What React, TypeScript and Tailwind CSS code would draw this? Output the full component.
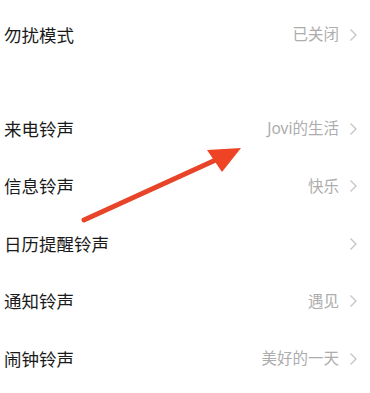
import React from 'react';

const rows: { label: string; value: string }[] = [
  { label: '来电铃声', value: 'Jovi的生活' },
  { label: '信息铃声', value: '快乐' },
  { label: '日历提醒铃声', value: '' },
  { label: '通知铃声', value: '遇见' },
  { label: '闹钟铃声', value: '美好的一天' },
];

const Chevron = () => (
  <svg width="9" height="14" viewBox="0 0 9 14" className="ml-[10px]">
    <path d="M1.5 1.5 L7 7 L1.5 12.5" fill="none" stroke="#c4c4c4" strokeWidth="1.3" />
  </svg>
);

const Row = ({ label, value, h }: { label: string; value: string; h: string }) => (
  <div className={`flex items-center justify-between pl-[4px] pr-[12px] ${h}`}>
    <span className="text-[17.5px] text-[#1a1a1a]">{label}</span>
    <div className="flex items-center">
      <span className="text-[15.5px] text-[#adadad]">{value}</span>
      <Chevron />
    </div>
  </div>
);

const App: React.FC = () => {
  return (
    <div
      className="relative w-[370px] h-[393px] bg-white overflow-hidden"
      style={{ fontFamily: '"Noto Sans", "Noto Sans CJK SC", sans-serif' }}
    >
      <div className="pt-[6px]">
        <Row label="勿扰模式" value="已关闭" h="h-[58px]" />
        <div className="h-[36px]" />
        {rows.map((r) => (
          <Row key={r.label} label={r.label} value={r.value} h="h-[57.5px]" />
        ))}
      </div>

      {/* annotation arrow */}
      <svg className="absolute left-0 top-0" width="370" height="393" viewBox="0 0 370 393">
        <line x1="84" y1="220" x2="220" y2="158" stroke="#e8442a" strokeWidth="5" strokeLinecap="round" />
        <polygon points="241,148 207,150 222,172" fill="#ee4425" />
      </svg>
    </div>
  );
};

export default App;
